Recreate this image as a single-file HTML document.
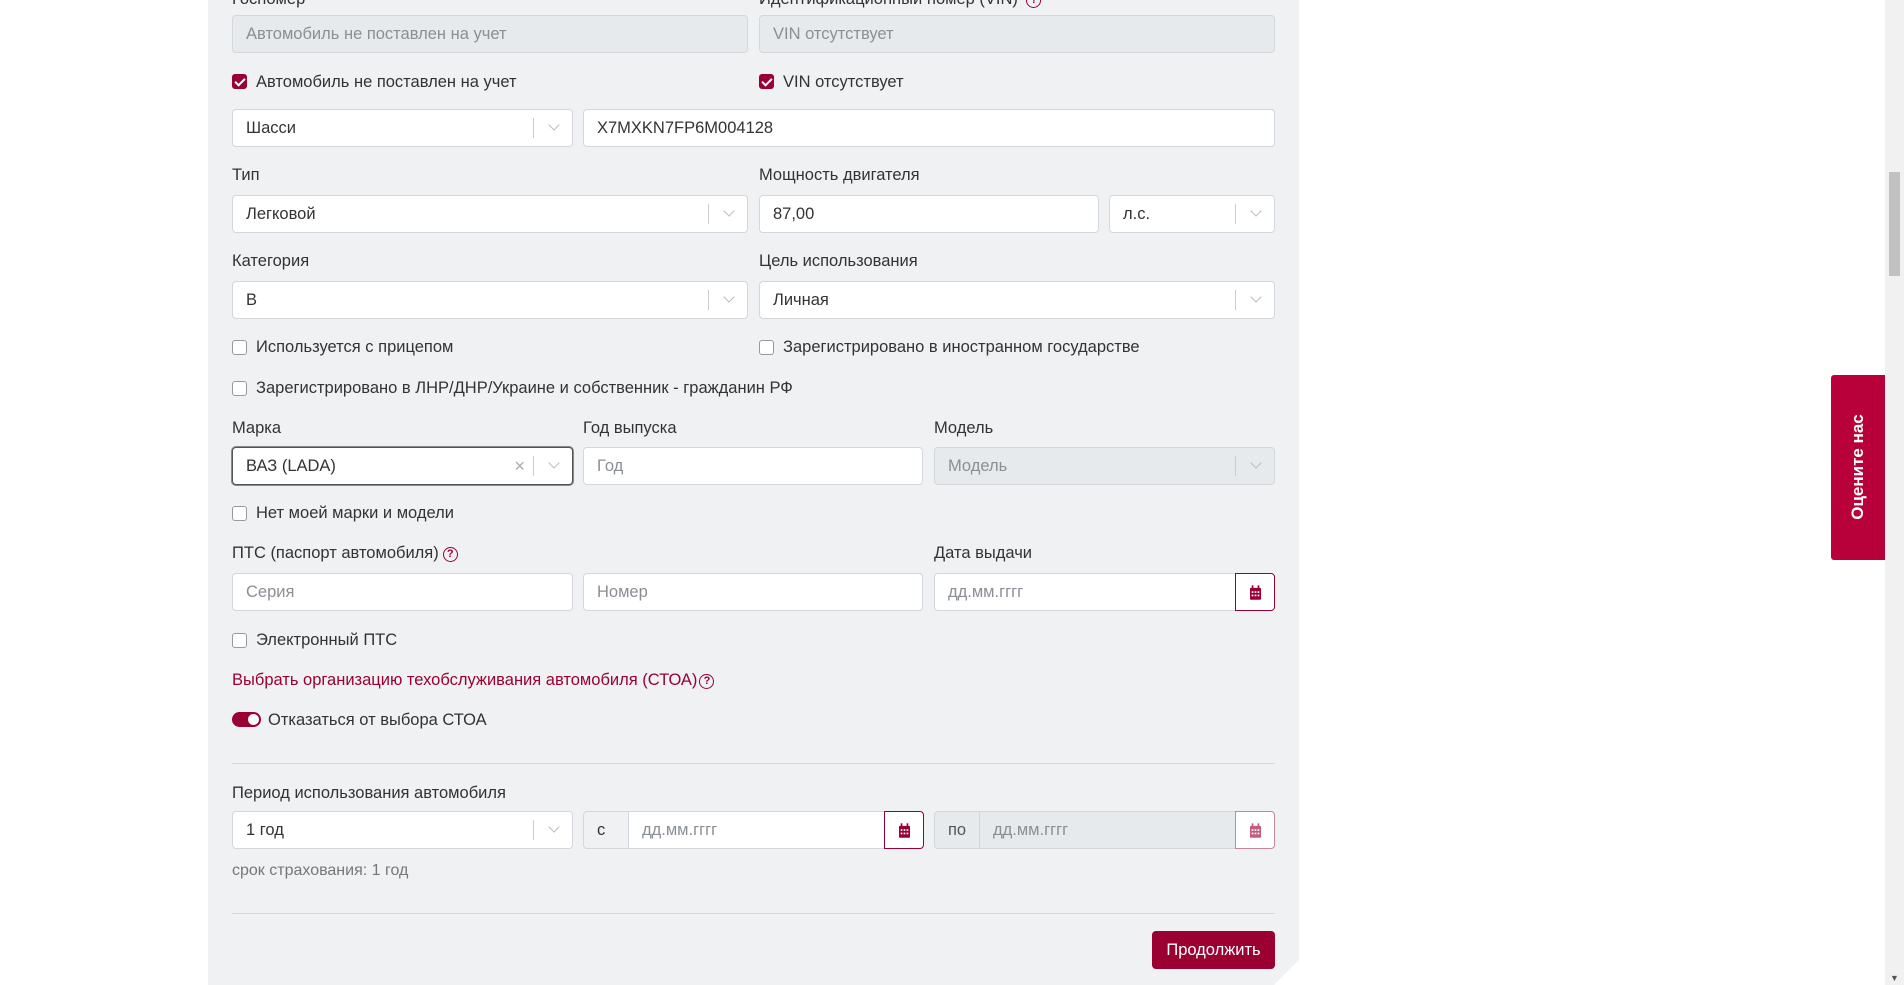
<!DOCTYPE html>
<html><head><meta charset="utf-8"><style>
*{box-sizing:border-box;margin:0;padding:0}
body{width:1904px;height:985px;background:#fff;font-family:"Liberation Sans",sans-serif;font-size:16.5px;color:#333;position:relative;overflow:hidden}
.panel{position:absolute;left:208px;top:0;width:1091px;height:985px;background:#f0f1f3;clip-path:polygon(0 0,100% 0,100% 960px,1066px 985px,0 985px)}
.a{position:absolute}
.lbl{position:absolute;color:#333;line-height:20px;margin-top:1px}
.in{position:absolute;height:38px;background:#fff;border:1px solid #d3d6da;border-radius:4px;line-height:37px;padding-left:13px;color:#333}
.dis{background:#e7eaed;color:#8a8f95}
.ph{color:#8a8f95}
.sel::after{content:"";position:absolute;right:38px;top:8px;height:20px;border-left:1px solid #ccc}
.sel::before{content:"";position:absolute;right:14px;top:11px;width:7px;height:7px;border-right:1.5px solid #bbb;border-bottom:1.5px solid #bbb;transform:rotate(45deg)}
.cb{position:absolute;width:15px;height:15px;border:1px solid #999;border-radius:3px;background:#fff}
.cb.on{background:#9b0032;border-color:#9b0032}
.cb.on::after{content:"";position:absolute;left:4px;top:1px;width:4px;height:8px;border-right:2px solid #fff;border-bottom:2px solid #fff;transform:rotate(45deg)}
.cbl{position:absolute;line-height:20px;margin-top:1px}
.cal{position:absolute;width:40px;height:38px;border:1px solid #9b0032;border-radius:0 4px 4px 0;background:#fff}
.cal svg{position:absolute;left:14px;top:11px}
.q{display:inline-block;width:15px;height:15px;border:1.6px solid #9b0032;border-radius:50%;color:#9b0032;font-size:11px;line-height:12px;text-align:center;font-weight:bold;vertical-align:1px;margin-left:4px}
.hr{position:absolute;left:232px;width:1043px;height:1px;background:#d5d7da}
</style></head><body>
<div class="panel"></div>

<div class="lbl" style="left:232px;top:-12px">Госномер</div>
<div class="lbl" style="left:759px;top:-12px">Идентификационный номер (VIN) <span class="q">?</span></div>
<div class="in dis" style="left:232px;top:15px;width:516px">Автомобиль не поставлен на учет</div>
<div class="in dis" style="left:759px;top:15px;width:516px">VIN отсутствует</div>

<div class="cb on" style="left:232px;top:74px"></div><div class="cbl" style="left:256px;top:71px">Автомобиль не поставлен на учет</div>
<div class="cb on" style="left:759px;top:74px"></div><div class="cbl" style="left:783px;top:71px">VIN отсутствует</div>

<div class="in sel" style="left:232px;top:109px;width:341px">Шасси</div>
<div class="in" style="left:583px;top:109px;width:692px">X7MXKN7FP6M004128</div>

<div class="lbl" style="left:232px;top:164px">Тип</div>
<div class="lbl" style="left:759px;top:164px">Мощность двигателя</div>
<div class="in sel" style="left:232px;top:195px;width:516px">Легковой</div>
<div class="in" style="left:759px;top:195px;width:340px">87,00</div>
<div class="in sel" style="left:1109px;top:195px;width:166px">л.с.</div>

<div class="lbl" style="left:232px;top:250px">Категория</div>
<div class="lbl" style="left:759px;top:250px">Цель использования</div>
<div class="in sel" style="left:232px;top:281px;width:516px">B</div>
<div class="in sel" style="left:759px;top:281px;width:516px">Личная</div>

<div class="cb" style="left:232px;top:340px"></div><div class="cbl" style="left:256px;top:336px">Используется с прицепом</div>
<div class="cb" style="left:759px;top:340px"></div><div class="cbl" style="left:783px;top:336px">Зарегистрировано в иностранном государстве</div>
<div class="cb" style="left:232px;top:381px"></div><div class="cbl" style="left:256px;top:377px">Зарегистрировано в ЛНР/ДНР/Украине и собственник - гражданин РФ</div>

<div class="lbl" style="left:232px;top:417px">Марка</div>
<div class="lbl" style="left:583px;top:417px">Год выпуска</div>
<div class="lbl" style="left:934px;top:417px">Модель</div>
<div class="in sel" style="left:232px;top:447px;width:341px;border:1px solid #555;box-shadow:0 0 0 1px #888">ВАЗ (LADA)<span class="a" style="right:47px;top:0;color:#aaa;font-size:18px">×</span></div>
<div class="in ph" style="left:583px;top:447px;width:340px">Год</div>
<div class="in sel dis" style="left:934px;top:447px;width:341px">Модель</div>

<div class="cb" style="left:232px;top:506px"></div><div class="cbl" style="left:256px;top:502px">Нет моей марки и модели</div>

<div class="lbl" style="left:232px;top:542px">ПТС (паспорт автомобиля)<span class="q">?</span></div>
<div class="lbl" style="left:934px;top:542px">Дата выдачи</div>
<div class="in ph" style="left:232px;top:573px;width:341px">Серия</div>
<div class="in ph" style="left:583px;top:573px;width:340px">Номер</div>
<div class="in ph" style="left:934px;top:573px;width:302px;border-radius:4px 0 0 4px">дд.мм.гггг</div>
<div class="cal" style="left:1235px;top:573px"><svg width="11" height="15" viewBox="0 0 13 17"><rect x="0" y="3" width="13" height="14" rx="1" fill="#9b0032"/><rect x="2" y="0" width="2" height="4" fill="#9b0032"/><rect x="9" y="0" width="2" height="4" fill="#9b0032"/><g fill="#fff"><rect x="2" y="7" width="2" height="2"/><rect x="5.5" y="7" width="2" height="2"/><rect x="9" y="7" width="2" height="2"/><rect x="2" y="11" width="2" height="2"/><rect x="5.5" y="11" width="2" height="2"/><rect x="9" y="11" width="2" height="2"/></g></svg></div>

<div class="cb" style="left:232px;top:633px"></div><div class="cbl" style="left:256px;top:629px">Электронный ПТС</div>

<div class="lbl" style="left:232px;top:669px;color:#9b0032">Выбрать организацию техобслуживания автомобиля (СТОА)<span class="q" style="margin-left:2px">?</span></div>

<div class="a" style="left:232px;top:712px;width:29px;height:15px;border-radius:8px;background:#9b0032"><div class="a" style="right:2px;top:2px;width:11px;height:11px;border-radius:50%;background:#fff"></div></div>
<div class="cbl" style="left:268px;top:709px">Отказаться от выбора СТОА</div>

<div class="hr" style="top:763px"></div>

<div class="lbl" style="left:232px;top:782px">Период использования автомобиля</div>
<div class="in sel" style="left:232px;top:811px;width:341px">1 год</div>
<div class="in" style="left:583px;top:811px;width:46px;background:#f0f1f3;border-radius:4px 0 0 4px">с</div>
<div class="in ph" style="left:628px;top:811px;width:257px;border-radius:0">дд.мм.гггг</div>
<div class="cal" style="left:884px;top:811px"><svg width="11" height="15" viewBox="0 0 13 17"><rect x="0" y="3" width="13" height="14" rx="1" fill="#9b0032"/><rect x="2" y="0" width="2" height="4" fill="#9b0032"/><rect x="9" y="0" width="2" height="4" fill="#9b0032"/><g fill="#fff"><rect x="2" y="7" width="2" height="2"/><rect x="5.5" y="7" width="2" height="2"/><rect x="9" y="7" width="2" height="2"/><rect x="2" y="11" width="2" height="2"/><rect x="5.5" y="11" width="2" height="2"/><rect x="9" y="11" width="2" height="2"/></g></svg></div>
<div class="in dis" style="left:934px;top:811px;width:46px;border-radius:4px 0 0 4px;color:#555">по</div>
<div class="in dis" style="left:979px;top:811px;width:257px;border-radius:0">дд.мм.гггг</div>
<div class="cal" style="left:1235px;top:811px;border-color:#c7869b"><svg width="11" height="15" viewBox="0 0 13 17"><rect x="0" y="3" width="13" height="14" rx="1" fill="#c35c7e"/><rect x="2" y="0" width="2" height="4" fill="#c35c7e"/><rect x="9" y="0" width="2" height="4" fill="#c35c7e"/><g fill="#fff"><rect x="2" y="7" width="2" height="2"/><rect x="5.5" y="7" width="2" height="2"/><rect x="9" y="7" width="2" height="2"/><rect x="2" y="11" width="2" height="2"/><rect x="5.5" y="11" width="2" height="2"/><rect x="9" y="11" width="2" height="2"/></g></svg></div>

<div class="lbl" style="left:232px;top:860px;color:#777;font-size:16px">срок страхования: 1 год</div>

<div class="hr" style="top:913px"></div>

<div class="a" style="left:1152px;top:931px;width:123px;height:38px;background:#9b0032;border-radius:4px;color:#fff;text-align:center;line-height:38px">Продолжить</div>

<div class="a" style="left:1831px;top:375px;width:54px;height:185px;background:#b8003a;border-radius:3px 0 0 3px"><div class="a" style="left:27px;top:92px;transform:translate(-50%,-50%) rotate(-90deg);color:#fff;font-weight:bold;font-size:17px;white-space:nowrap">Оцените нас</div></div>

<div class="a" style="left:1885px;top:0;width:19px;height:985px;background:#f1f1f1"></div>
<div class="a" style="left:1889px;top:172px;width:11px;height:104px;background:#c1c1c1"></div>
<div class="a" style="left:1890px;top:973px;color:#555;font-size:9px">▼</div>
</body></html>
